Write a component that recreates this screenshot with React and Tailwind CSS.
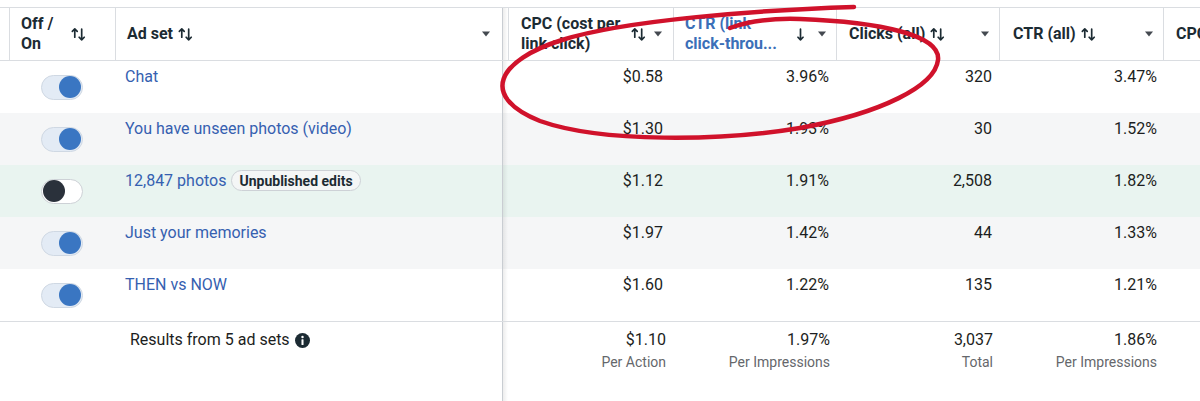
const rows = [
  { name: 'Chat', on: true, cpc: '$0.58', ctr: '3.96%', clicks: '320', ctrAll: '3.47%', bg: 'bg-white' },
  { name: 'You have unseen photos (video)', on: true, cpc: '$1.30', ctr: '1.93%', clicks: '30', ctrAll: '1.52%', bg: 'bg-[#f5f6f7]' },
  { name: '12,847 photos', badge: 'Unpublished edits', on: false, cpc: '$1.12', ctr: '1.91%', clicks: '2,508', ctrAll: '1.82%', bg: 'bg-[#e9f4f0]' },
  { name: 'Just your memories', on: true, cpc: '$1.97', ctr: '1.42%', clicks: '44', ctrAll: '1.33%', bg: 'bg-[#f5f6f7]' },
  { name: 'THEN vs NOW', on: true, cpc: '$1.60', ctr: '1.22%', clicks: '135', ctrAll: '1.21%', bg: 'bg-white' },
]

function SortIcon() {
  return (
    <svg width="17" height="17" viewBox="0 0 16 16" fill="none" stroke="currentColor" strokeWidth="1.6" strokeLinecap="round" strokeLinejoin="round" className="shrink-0">
      <path d="M4.5 10.5V2.8M2.2 5.1 4.5 2.8l2.3 2.3" />
      <path d="M11 3v10M8.6 10.6 11 13l2.4-2.4" />
    </svg>
  )
}

function DownIcon() {
  return (
    <svg width="17" height="17" viewBox="0 0 16 16" fill="none" stroke="currentColor" strokeWidth="1.6" strokeLinecap="round" strokeLinejoin="round" className="shrink-0">
      <path d="M8 3v10M5.6 10.6 8 13l2.4-2.4" />
    </svg>
  )
}

function Caret() {
  return (
    <svg width="10" height="6" viewBox="0 0 10 6" className="shrink-0">
      <path d="M1 0.5h8L5 5.5z" fill="#444950" />
    </svg>
  )
}

function Toggle({ on }) {
  if (on) {
    return (
      <div className="w-[42px] h-[25px] rounded-full bg-[#e3ebf5] border border-[#cfd8e3] flex items-center justify-end pr-[1px]">
        <div className="w-[22px] h-[22px] rounded-full bg-[#3a76c2]" />
      </div>
    )
  }
  return (
    <div className="w-[42px] h-[25px] rounded-full bg-white border border-[#cdd1d6] flex items-center pl-[1px]">
      <div className="w-[22px] h-[22px] rounded-full bg-[#2a313b]" />
    </div>
  )
}

function InfoIcon() {
  return (
    <svg width="15" height="15" viewBox="0 0 16 16" className="shrink-0">
      <circle cx="8" cy="8" r="8" fill="#1c2b33" />
      <circle cx="8" cy="4.3" r="1.3" fill="#fff" />
      <rect x="6.9" y="6.6" width="2.2" height="6.2" rx="0.6" fill="#fff" />
    </svg>
  )
}

function Divider() {
  return (
    <>
      <div className="w-px self-stretch bg-[#c9cdd2]" />
      <div className="w-[5px] self-stretch bg-gradient-to-r from-[#00000012] to-transparent" />
    </>
  )
}

export default function App() {
  return (
    <div className="relative w-[1200px] h-[401px] overflow-hidden bg-white text-[#1c1e21] font-['Roboto',sans-serif]">
      <div className="h-[7px]" />

      {/* header */}
      <div className="flex h-[54px] border-y border-[#dadde1] text-[16px] font-bold leading-[20px] text-[#1c2b33]">
        <div className="w-[9px]" />
        <div className="w-[106px] border-l border-[#dadde1] flex items-center pl-[11px] gap-[7px]">
          <span className="w-[42px]">Off /<br />On</span>
          <SortIcon />
        </div>
        <div className="w-[387px] border-l border-[#dadde1] flex items-center pl-[11px] pr-[11px]">
          <span>Ad set</span>
          <span className="ml-[4px] flex"><SortIcon /></span>
          <span className="ml-auto flex"><Caret /></span>
        </div>
        <Divider />
        <div className="w-[165px] border-l border-[#dadde1] flex items-center pl-[12px] pr-[10px] gap-[6px]">
          <span className="flex-1 whitespace-nowrap">CPC (cost per<br />link click)</span>
          <SortIcon />
          <Caret />
        </div>
        <div className="w-[163px] border-l border-[#dadde1] flex items-center pl-[11px] pr-[9px] gap-[8px]">
          <span className="flex-1 whitespace-nowrap text-[#3b6fb8]">CTR (link<br />click-throu...</span>
          <DownIcon />
          <Caret />
        </div>
        <div className="w-[163px] border-l border-[#dadde1] flex items-center pl-[12px] pr-[9px]">
          <span>Clicks (all)</span>
          <span className="ml-[4px] flex"><SortIcon /></span>
          <span className="ml-auto flex"><Caret /></span>
        </div>
        <div className="w-[164px] border-l border-[#dadde1] flex items-center pl-[13px] pr-[9px]">
          <span>CTR (all)</span>
          <span className="ml-[4px] flex"><SortIcon /></span>
          <span className="ml-auto flex"><Caret /></span>
        </div>
        <div className="flex-1 border-l border-[#dadde1] flex items-center pl-[12px] whitespace-nowrap overflow-hidden">
          <span>CPC</span>
        </div>
      </div>

      {/* rows */}
      {rows.map((r, i) => (
        <div key={i} className={`flex h-[52px] text-[16px] leading-[20px] ${r.bg}`}>
          <div className="w-[115px] pl-[9px] flex items-center justify-center">
            <Toggle on={r.on} />
          </div>
          <div className="w-[387px] pl-[10px] pt-[6px] flex items-start">
            <span className="text-[#3560b0]">{r.name}</span>
            {r.badge && (
              <span className="ml-[5px] mt-[-1px] px-[7px] h-[21px] flex items-center rounded-full border border-[#cdd1d6] bg-[#f4f6f6] text-[14px] font-bold text-[#1c2b33]">
                {r.badge}
              </span>
            )}
          </div>
          <Divider />
          <div className="w-[165px] pt-[6px] pr-[10px] text-right">{r.cpc}</div>
          <div className="w-[163px] pt-[6px] pr-[7px] text-right">{r.ctr}</div>
          <div className="w-[163px] pt-[6px] pr-[7px] text-right">{r.clicks}</div>
          <div className="w-[164px] pt-[6px] pr-[6px] text-right">{r.ctrAll}</div>
          <div className="flex-1" />
        </div>
      ))}

      {/* footer */}
      <div className="flex h-[81px] border-t border-[#dadde1] text-[16px] leading-[20px]">
        <div className="w-[502px] pl-[130px] pt-[8px]">
          <div className="flex items-center gap-[5px]">
            <span>Results from 5 ad sets</span>
            <InfoIcon />
          </div>
        </div>
        <Divider />
        <div className="w-[165px] pt-[8px] pr-[7px] text-right">
          <div>$1.10</div>
          <div className="text-[14px] leading-[24px] text-[#65676b]">Per Action</div>
        </div>
        <div className="w-[163px] pt-[8px] pr-[6px] text-right">
          <div>1.97%</div>
          <div className="text-[14px] leading-[24px] text-[#65676b]">Per Impressions</div>
        </div>
        <div className="w-[163px] pt-[8px] pr-[6px] text-right">
          <div>3,037</div>
          <div className="text-[14px] leading-[24px] text-[#65676b]">Total</div>
        </div>
        <div className="w-[164px] pt-[8px] pr-[6px] text-right">
          <div>1.86%</div>
          <div className="text-[14px] leading-[24px] text-[#65676b]">Per Impressions</div>
        </div>
        <div className="flex-1" />
      </div>

      {/* hand-drawn red ellipse */}
      <svg className="absolute inset-0 pointer-events-none" width="1200" height="401" viewBox="0 0 1200 401" fill="none">
        <path
          d="M854 7 C760 10 625 20 562 40 C498 60 478 96 540 121 C602 143 722 141 800 128 C882 113 935 86 938 60 C941 35 880 22 800 19 C770 18 746 22 730 28"
          stroke="#d0122b"
          strokeWidth="4.5"
          strokeLinecap="round"
          strokeLinejoin="round"
        />
      </svg>
    </div>
  )
}
